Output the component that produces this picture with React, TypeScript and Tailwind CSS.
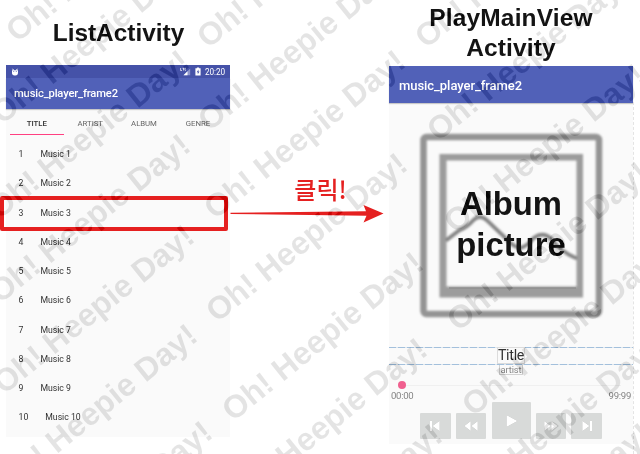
import React from "react";

const songs = [1, 2, 3, 4, 5, 6, 7, 8, 9, 10];

// Centre of the leading letter of every watermark.
const marks: [number, number][] = [
  [19, 27], [210, 33], [428, 33],
  [4, 109], [211, 116], [440, 126],
  [1, 204], [217, 204], [457, 218],
  [2, 288], [219, 307], [460, 316],
  [6, 379], [235, 406], [475, 401],
  [9, 478], [239, 492], [471, 492],
  [24, 575], [254, 578], [463, 577],
];

function Watermarks() {
  return (
    <div className="pointer-events-none absolute inset-0 overflow-hidden mix-blend-difference">
      {marks.map(([x, y], i) => (
        <span
          key={i}
          className="absolute origin-[12.5px_15.6px] rotate-[-38.8deg] whitespace-nowrap text-[32px] leading-[32px] font-bold text-[#1b1b1b]"
          style={{ left: x - 12.5, top: y - 15.6 }}
        >
          Oh! Heepie Day!
        </span>
      ))}
    </div>
  );
}

function StatusBar() {
  return (
    <div className="flex h-[13px] items-center bg-[#4552a8] pr-[5px] pl-[5px] text-white">
      <svg className="h-[8px] w-[8px]" viewBox="0 0 8 8">
        <path d="M1 2.200h6v2.600a2.600 2.600 0 0 1-2.600 2.600h-.8A2.600 2.600 0 0 1 1 4.800z" fill="currentColor" />
        <path d="M1.600 .8 2.600 2.300M6.400 .8 5.400 2.300" stroke="currentColor" strokeWidth="1" />
        <path d="M2.300 3.200h.9v.8h-.9zM4.800 3.200h.9v.8h-.9z" fill="#4552a8" />
      </svg>
      <svg className="ml-auto h-[9px] w-[11px]" viewBox="0 0 11 9">
        <path d="M.6 1v2.500h1.400M2.500 1.300h2M3.500 1.300v2.200M5.800 1.300H5v2h.9" stroke="currentColor" strokeWidth=".7" fill="none" />
        <path d="M10.200 1.500v6.700H3.500z" fill="#8d95cb" />
        <path d="M7.500 4.200v4H3.500z" fill="currentColor" />
      </svg>
      <svg className="ml-[4px] h-[9px] w-[6px]" viewBox="0 0 6 9">
        <path d="M.4 1.300h1.500V.4h2.200v.9h1.500v7.300H.4z" fill="currentColor" />
        <path d="M3.500 2.500 1.700 5.200h1.100v2.100l1.700-2.900H3.400z" fill="#4552a8" />
      </svg>
      <span className="ml-[4px] pt-px text-[8.200px] leading-none tracking-[-0.1px]">20:20</span>
    </div>
  );
}

function ListScreen() {
  return (
    <section className="flex h-[372px] w-[224px] flex-col bg-[#fafafa] font-['Roboto',sans-serif]">
      <StatusBar />
      <div className="flex h-[31px] shrink-0 items-center bg-[#5161b8] pt-[2px] pl-2 text-[11.200px] font-medium tracking-[-0.150px] text-white shadow-[0_1px_1px_rgba(0,0,0,0.2)]">
        music_player_frame2
      </div>
      <nav className="flex h-[26px] shrink-0 pr-1 pl-[4px] text-[7.800px] tracking-[-0.050px] text-[#666]">
        <span className="flex w-[53.500px] items-center justify-center border-b border-[#ff4081] pt-[5px] font-medium text-[#333]">TITLE</span>
        <span className="flex w-[53.500px] items-center justify-center pt-[4px]">ARTIST</span>
        <span className="flex w-[54px] items-center justify-center pt-[4px]">ALBUM</span>
        <span className="flex w-[54px] items-center justify-center pt-[4px]">GENRE</span>
      </nav>
      <ul className="mt-[5px] text-[8.700px] text-[#333]">
        {songs.map((n) => (
          <li key={n} className="flex h-[29.250px] items-center gap-[17px] pl-[12.500px]">
            <span>{n}</span>
            <span>Music {n}</span>
          </li>
        ))}
      </ul>
    </section>
  );
}

function AlbumArt() {
  return (
    <div className="relative h-[244.500px] w-full">
      <svg className="h-full w-full" viewBox="389 102.500 244 244.500">
        <defs>
          <filter id="soft" x="-10%" y="-10%" width="120%" height="120%">
            <feGaussianBlur stdDeviation="1.300" />
          </filter>
        </defs>
        <g filter="url(#soft)" fill="none" stroke="#949494">
          <rect x="423.500" y="136.500" width="175.500" height="177" rx="3" strokeWidth="6.500" />
          <path d="M439.500 153.500h143.500v143.500h-143.500zM446.500 160v126h130V160z" fill="#9c9c9c" fillRule="evenodd" stroke="none" />
          <path d="M446 240 459 230Q467 227 473 220Q480 213 487 220L504 236Q514 248 522 247Q529 244 533 238Q543 230 552 239Q560 251 577 258" strokeWidth="3.800" stroke="#858585" />
        </g>
        <path d="M449 287.500h127" stroke="#858585" strokeWidth="2" opacity=".5" />
      </svg>
      <h2 className="absolute inset-x-0 top-[80.500px] text-center text-[32.800px] leading-[41px] font-bold text-[#141414]">
        Album
        <br />
        picture
      </h2>
    </div>
  );
}

function Guide() {
  return (
    <div className="h-px shrink-0 bg-[repeating-linear-gradient(90deg,#a3c0dc_0_7px,#dfe7ee_7px_9px)]" />
  );
}

function ControlButton({ kind }: { kind: "prev" | "rew" | "ff" | "next" }) {
  const shapes = {
    prev: "M1 .8h2v10.400H1zM10.700 .8v10.400L3.500 6z",
    rew: "M6.500 1v10L0 6zM13.500 1v10L7 6z",
    ff: "M0 1v10l6.500-5zM7 1v10l6.500-5z",
    next: "M1.300 .8v10.400L8.500 6zM9 .8h2v10.400H9z",
  };
  return (
    <button className="flex h-[26px] w-[30.300px] items-center justify-center rounded-[1px] bg-[#d8dad9]">
      <svg
        className="h-3 w-[14px] drop-shadow-[0_0_0.500px_rgba(0,0,0,0.3)]"
        viewBox={kind === "rew" || kind === "ff" ? "-0.25 0 14 12" : "-1 0 14 12"}
      >
        <path d={shapes[kind]} fill="#fff" />
      </svg>
    </button>
  );
}

function PlayScreen() {
  return (
    <section className="flex h-[378px] w-[244px] flex-col bg-[#fafafa] font-['Roboto',sans-serif]">
      <div className="flex h-[36.500px] shrink-0 items-center bg-[#5161b8] pt-[2px] pl-[10px] text-[13px] font-medium tracking-[-0.050px] text-white shadow-[0_1px_1px_rgba(0,0,0,0.2)]">
        music_player_frame2
      </div>
      <div className="w-full font-['Liberation_Sans',Arial,sans-serif]">
        <AlbumArt />
      </div>
      <Guide />
      <div className="-mt-[0.500px] flex h-[16.500px] shrink-0 items-center justify-center">
        <span className="border border-[#dcdcdc] text-[14.300px] leading-[15px] tracking-[-0.300px] text-[#333]">Title</span>
      </div>
      <Guide />
      <div className="flex h-[10px] shrink-0 justify-center">
        <span className="h-[10px] border border-t-0 border-[#d2d2d2] text-[9.400px] leading-[9px] tracking-[-0.100px] text-[#858585]">artist</span>
      </div>
      <div className="flex h-[20px] shrink-0 items-center pr-3 pl-[8.500px]">
        <span className="h-2 w-2 rounded-full bg-[#f0608f]" />
        <span className="h-px flex-1 bg-[#f0f0f0]" />
      </div>
      <div className="-mt-[4px] flex h-[11px] shrink-0 items-center justify-between px-[2px] text-[9.600px] tracking-[-0.300px] text-[#858585]">
        <span>00:00</span>
        <span>99:99</span>
      </div>
      <div className="flex items-end justify-center gap-[5.300px]">
        <ControlButton kind="prev" />
        <ControlButton kind="rew" />
        <button className="flex h-[37px] w-[39px] items-center justify-center rounded-[1px] bg-[#d8dad9]">
          <svg className="h-[14px] w-[13px] drop-shadow-[0_0_0.500px_rgba(0,0,0,0.3)]" viewBox="0 0 13 14">
            <path d="M1.500 1v12l11-6z" fill="#fff" />
          </svg>
        </button>
        <ControlButton kind="ff" />
        <ControlButton kind="next" />
      </div>
    </section>
  );
}

export default function App() {
  return (
    <main className="relative flex h-[454px] w-[640px] overflow-hidden bg-white font-['Liberation_Sans',Arial,sans-serif]">
      <div className="ml-[6px] flex w-[224px] shrink-0 flex-col">
        <h1 className="flex h-[65px] shrink-0 justify-center pt-[19px] pl-px text-[24.400px] leading-[28px] font-bold text-[#141414]">
          ListActivity
        </h1>
        <ListScreen />
      </div>

      <div className="flex w-[159px] shrink-0 flex-col">
        <p className="mt-[172px] h-[33px] pl-[22px] text-center font-['Noto_Sans_CJK_KR',sans-serif] text-[24px] leading-[33px] font-medium text-[#e52020]">
          클릭!
        </p>
        <svg className="h-[18px] w-[159px]" viewBox="0 0 159 18">
          <path d="M.5 7.800 136 6.200 133.500 0 153.500 8.500 133.500 17.500 136.500 10.800.5 8.900z" fill="#e52020" />
        </svg>
      </div>

      <div className="flex w-[244px] shrink-0 flex-col">
        <h1 className="flex h-[66px] shrink-0 justify-center pt-[3px] text-center text-[24.500px] leading-[30px] font-bold tracking-[0.150px] text-[#141414]">
          <span>
            PlayMainView
            <br />
            Activity
          </span>
        </h1>
        <PlayScreen />
      </div>
      <div className="mt-[102px] h-[352px] w-px border-l border-dashed border-[#e4e4e4]" />

      <div className="absolute top-[196px] left-0 h-[35px] w-[228px] rounded-[2px] border-4 border-[#e52020]" />
      <Watermarks />
    </main>
  );
}
